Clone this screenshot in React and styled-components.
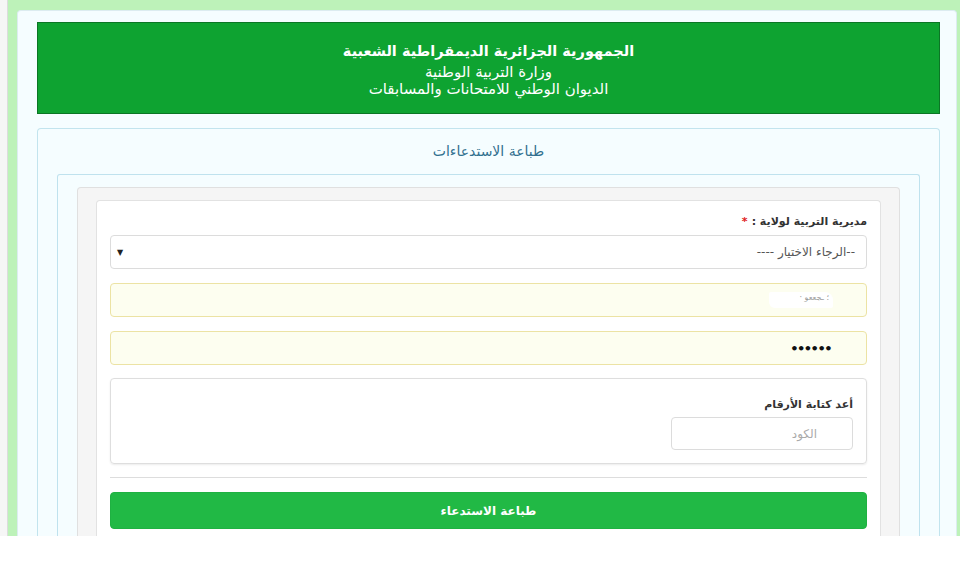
import React from 'react';
import styled, { createGlobalStyle } from 'styled-components';

const GlobalStyle = createGlobalStyle`
  html, body {
    margin: 0;
    padding: 0;
    background: #ffffff;
  }
  body {
    font-family: "DejaVu Sans", "Noto Sans", sans-serif;
    color: #333;
  }
  * { box-sizing: border-box; }
`;

const Page = styled.div`
  display: flex;
  height: 536px;
  overflow: hidden;
`;

const Gutter = styled.div`
  width: 8px;
  background: #f6f6f6;
  border-right: 1px solid #dcdcdc;
`;

const Stage = styled.div`
  flex: 1;
  background: #bdf2b9;
  padding: 10px 3px 0 9px;
`;

const Container = styled.div`
  height: 100%;
  background: #f5fdff;
  border: 1px solid #dcecf0;
  border-bottom: none;
  border-radius: 4px 4px 0 0;
  padding: 11px 16px 0 19px;
  direction: rtl;
`;

const Header = styled.header`
  height: 92px;
  background: #0ea331;
  border: 1px solid #0b7625;
  color: #fff;
  text-align: center;
  padding-top: 17px;
`;

const HeaderLine = styled.div`
  font-size: ${p => (p.$main ? '14.5px' : '15px')};
  font-weight: ${p => (p.$main ? 'bold' : 'normal')};
  line-height: ${p => (p.$main ? '22px' : '17px')};
  margin-bottom: ${p => (p.$main ? '2px' : '0')};
`;

const Panel = styled.section`
  margin-top: 14px;
  background: #f5fdff;
  border: 1px solid #c2e4ee;
  border-radius: 4px 4px 0 0;
  border-bottom: none;
  height: 420px;
`;

const PanelTitle = styled.h3`
  margin: 0;
  height: 45px;
  line-height: 45px;
  text-align: center;
  font-size: 14px;
  font-weight: normal;
  color: #31708f;
`;

const PanelBody = styled.div`
  padding: 0 19px;
`;

const InnerPanel = styled.div`
  border: 1px solid #bfe2ee;
  border-bottom: none;
  border-radius: 3px 3px 0 0;
  padding: 12px 19px 0;
  height: 380px;
`;

const Well = styled.div`
  background: #f5f5f5;
  border: 1px solid #e0e0e0;
  border-bottom: none;
  border-radius: 4px 4px 0 0;
  padding: 12px 18px 0;
  height: 370px;
`;

const Card = styled.div`
  background: #fff;
  border: 1px solid #e2e2e2;
  border-bottom: none;
  border-radius: 4px 4px 0 0;
  padding: 12px 13px 0;
  height: 360px;
`;

const Label = styled.label`
  display: block;
  font-size: 11px;
  font-weight: bold;
  color: #333;
  line-height: 17px;
  margin-bottom: ${p => p.$gap || 5}px;
`;

const Required = styled.span`
  color: #e02020;
  margin-right: 4px;
`;

const Field = styled.div`
  height: ${p => p.$h || 34}px;
  width: ${p => (p.$w ? `${p.$w}px` : '100%')};
  margin-top: ${p => p.$mt || 0}px;
  display: flex;
  align-items: center;
  justify-content: space-between;
  padding: 0 ${p => p.$pr || 11}px 0 6px;
  border: 1px solid ${p => (p.$auto ? '#ece3a4' : '#dcdcdc')};
  background: ${p => (p.$auto ? '#fdfef0' : '#fff')};
  border-radius: 4px;
  font-size: 12px;
  color: ${p => p.$color || '#555'};
`;

const Arrow = styled.span`
  font-size: 8px;
  color: #222;
`;

const Masked = styled.span`
  display: inline-block;
  width: 64px;
  height: 16px;
  background: #fff;
  border-radius: 2px 8px 2px 6px;
  font-size: 8px;
  line-height: 12px;
  color: #9a9a9a;
  padding-right: 4px;
  letter-spacing: 1px;
`;

const Dots = styled.span`
  font-size: 13px;
  font-weight: bold;
  letter-spacing: -1.5px;
  color: #111;
`;

const Captcha = styled.div`
  margin-top: 13px;
  height: 86px;
  border: 1px solid #dedede;
  border-radius: 4px;
  box-shadow: 0 1px 2px rgba(0, 0, 0, 0.08);
  padding: 17px 13px 0;
`;

const Rule = styled.hr`
  margin: 13px 0 14px;
  border: none;
  border-top: 1px solid #dddddd;
`;

const SubmitButton = styled.button`
  display: block;
  width: 100%;
  height: 37px;
  border: 1px solid #1fb142;
  border-radius: 4px;
  background: #21b945;
  color: #fff;
  font-family: inherit;
  font-size: 12px;
  font-weight: bold;
`;

export default function App() {
  return (
    <>
      <GlobalStyle />
      <Page>
        <Gutter />
        <Stage>
          <Container>
            <Header>
              <HeaderLine $main>الجمهورية الجزائرية الديمقراطية الشعبية</HeaderLine>
              <HeaderLine>وزارة التربية الوطنية</HeaderLine>
              <HeaderLine>الديوان الوطني للامتحانات والمسابقات</HeaderLine>
            </Header>
            <Panel>
              <PanelTitle>طباعة الاستدعاءات</PanelTitle>
              <PanelBody>
                <InnerPanel>
                  <Well>
                    <Card>
                      <Label>
                        مديرية التربية لولاية :<Required>*</Required>
                      </Label>
                      <Field>
                        <span>--الرجاء الاختيار ----</span>
                        <Arrow>▼</Arrow>
                      </Field>
                      <Field $auto $mt={14} $pr={33}>
                        <Masked>؛ ـجععو ·</Masked>
                      </Field>
                      <Field $auto $mt={14} $pr={35}>
                        <Dots>••••••</Dots>
                      </Field>
                      <Captcha>
                        <Label $gap={4}>أعد كتابة الأرقام</Label>
                        <Field $w={182} $h={33} $pr={35} $color="#aaa">
                          <span>الكود</span>
                        </Field>
                      </Captcha>
                      <Rule />
                      <SubmitButton>طباعة الاستدعاء</SubmitButton>
                    </Card>
                  </Well>
                </InnerPanel>
              </PanelBody>
            </Panel>
          </Container>
        </Stage>
      </Page>
    </>
  );
}
